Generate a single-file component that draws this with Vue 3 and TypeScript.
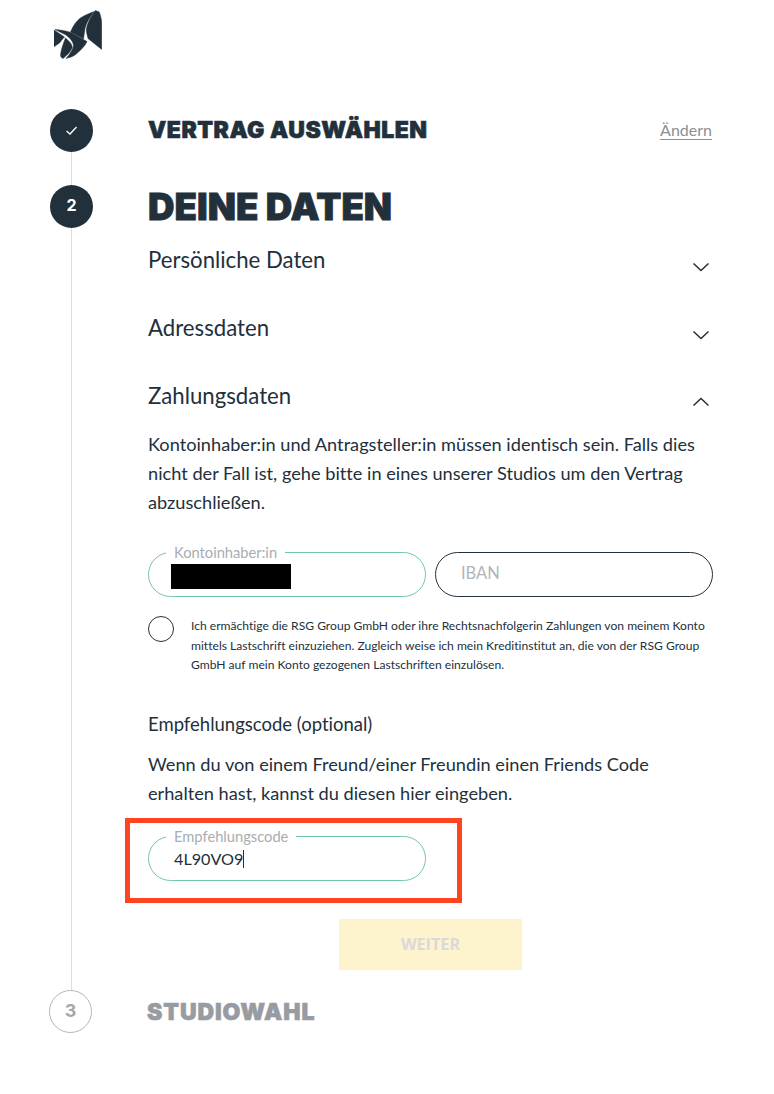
<template>
  <div class="page">
    <svg class="logo" width="48" height="50" viewBox="54 10 48 50" fill="#22303c" stroke="#22303c" stroke-width="0.5">
      <path d="M70.5 32 C73 26 76 21.5 80 18.3 C85 15 90 13 94.5 11.5 C90 17 86.5 22 85 28.5 L83.5 39 Z" />
      <path d="M95.5 10.5 L99.3 12 C101 17 101.7 20 101.7 24 L101.7 49.5 L88 38.5 C86.8 34 86 31 86.5 28.3 C88 21 92 15 95.5 10.5 Z" />
      <path d="M54 30 L64.5 37 C62 39.5 60.5 42 59.5 43 L54 46.7 Z" />
      <path d="M55 29.5 C62 30 66 31 71 32.5 L87 41.5 C85 46 80 51 75 55 C72 57 69 57.5 66 58.5 C70 54 72.5 50 73.5 46 C73.5 42 70 38 66 35 Z" />
      <path d="M65.5 38 C69 41 72 44 72.3 47 C71 52 66 56 63 58.5 C61 58 60.3 56 60.6 54 C61.5 48 63.5 43 65.5 38 Z" />
    </svg>

    <div class="steps">
      <div class="step-line"></div>

      <section class="step step-done">
        <div class="step-circle">
          <svg width="13" height="11" viewBox="0 0 13 11" fill="none" stroke="#fff" stroke-width="1.3">
            <path d="M1.5 6 L5 9 L11.5 2" />
          </svg>
        </div>
        <h2 class="step-title">VERTRAG AUSWÄHLEN</h2>
        <a class="change-link">Ändern</a>
      </section>

      <section class="step step-active">
        <div class="step-circle">2</div>
        <div class="step-body">
          <h1 class="main-title">DEINE DATEN</h1>

          <div v-for="row in closedRows" :key="row" class="acc-row">
            <span>{{ row }}</span>
            <svg class="chevron" width="18" height="10" viewBox="0 0 18 10" fill="none" stroke="#22303c" stroke-width="1.5">
              <path d="M1.5 1.5 L9 8.5 L16.5 1.5" />
            </svg>
          </div>

          <div class="acc-row acc-open">
            <span>Zahlungsdaten</span>
            <svg class="chevron" width="18" height="10" viewBox="0 0 18 10" fill="none" stroke="#22303c" stroke-width="1.5">
              <path d="M1.5 8.5 L9 1.5 L16.5 8.5" />
            </svg>
          </div>

          <p class="copy">
            Kontoinhaber:in und Antragsteller:in müssen identisch sein. Falls dies nicht der Fall ist, gehe bitte in eines unserer Studios um den Vertrag abzuschließen.
          </p>

          <div class="field-row">
            <div class="field field-filled">
              <span class="field-label">Kontoinhaber:in</span>
              <span class="redacted"></span>
            </div>
            <div class="field">
              <span class="field-placeholder">IBAN</span>
            </div>
          </div>

          <div class="consent">
            <span class="radio"></span>
            <p>
              Ich ermächtige die RSG Group GmbH oder ihre Rechtsnachfolgerin Zahlungen von meinem Konto mittels Lastschrift einzuziehen. Zugleich weise ich mein Kreditinstitut an, die von der RSG Group GmbH auf mein Konto gezogenen Lastschriften einzulösen.
            </p>
          </div>

          <h3 class="sub-title">Empfehlungscode (optional)</h3>
          <p class="copy copy-short">
            Wenn du von einem Freund/einer Freundin einen Friends Code erhalten hast, kannst du diesen hier eingeben.
          </p>

          <div class="field field-filled field-code">
            <span class="field-label">Empfehlungscode</span>
            <span class="field-value">4L90VO9</span><span class="caret"></span>
            <div class="highlight"></div>
          </div>

          <button class="next-btn" type="button">WEITER</button>
        </div>
      </section>

      <section class="step step-todo">
        <div class="step-circle">3</div>
        <h2 class="step-title">STUDIOWAHL</h2>
      </section>
    </div>
  </div>
</template>

<script setup lang="ts">
const closedRows: string[] = ['Persönliche Daten', 'Adressdaten'];
</script>

<style>
body {
  background: #fff;
}
</style>

<style scoped>
.page {
  width: 774px;
  height: 1094px;
  box-sizing: border-box;
  padding: 10px 61px 0 49px;
  font-family: Lato, "Open Sans", sans-serif;
  font-variant-ligatures: none;
  color: #22303c;
  background: #fff;
  overflow: hidden;
}

.logo {
  display: block;
  margin-left: 5px;
}

.steps {
  position: relative;
  margin-top: 49px;
}

.step-line {
  position: absolute;
  left: 22px;
  top: 20px;
  bottom: 20px;
  width: 1px;
  background: #dcdfe1;
}

.step {
  position: relative;
  display: flex;
  align-items: center;
}

.step-circle {
  flex: none;
  width: 43px;
  height: 43px;
  box-sizing: border-box;
  margin-left: 1px;
  border-radius: 50%;
  background: #22303c;
  color: #fff;
  display: flex;
  align-items: center;
  justify-content: center;
  font-family: Inter, sans-serif;
  font-weight: 700;
  font-size: 16px;
}

.step-title {
  margin: 0 0 0 55px;
  font-family: Inter, sans-serif;
  font-weight: 900;
  font-size: 23px;
  line-height: 43px;
  letter-spacing: 0.5px;
  -webkit-text-stroke: 0.6px currentColor;
}

.change-link {
  margin-left: auto;
  margin-right: 1px;
  margin-bottom: 3px;
  font-size: 16px;
  color: #8b9197;
  text-decoration: underline;
  text-underline-offset: 3px;
}

.step-active {
  align-items: flex-start;
  margin-top: 33px;
}

.step-active .step-circle {
  padding-bottom: 3px;
}

.step-body {
  width: 565px;
  margin-left: 55px;
}

.main-title {
  margin: 0 0 17px;
  font-family: Inter, sans-serif;
  font-weight: 900;
  font-size: 36.7px;
  line-height: 43px;
  -webkit-text-stroke: 0.8px currentColor;
}

.acc-row {
  display: flex;
  justify-content: space-between;
  align-items: flex-start;
  height: 68px;
  font-size: 22.2px;
  line-height: 30px;
  padding-right: 3px;
}

.chevron {
  margin-top: 17px;
}

.acc-open {
  height: 49px;
}

.acc-open .chevron {
  margin-top: 16px;
}

.copy {
  margin: 0;
  font-size: 18.2px;
  line-height: 29px;
}

.field-row {
  display: flex;
  gap: 9px;
  margin-top: 35px;
}

.field {
  position: relative;
  width: 278px;
  height: 45px;
  box-sizing: border-box;
  border: 1px solid #22303c;
  border-radius: 23px;
  padding-left: 25px;
  display: flex;
  align-items: center;
  font-size: 16px;
}

.field-filled {
  border-color: #73c8a9;
}

.field-label {
  position: absolute;
  left: 17px;
  top: -10px;
  padding: 0 8px;
  background: #fff;
  font-size: 14.7px;
  line-height: 18px;
  color: #a8adb1;
}

.field-placeholder {
  color: #b0b4b8;
  font-size: 16.5px;
  margin-top: -3px;
}

.redacted {
  width: 120px;
  height: 25px;
  margin-left: -3px;
  margin-top: 4px;
  background: #000;
}

.consent {
  display: flex;
  align-items: flex-start;
  gap: 17px;
  margin-top: 19px;
}

.radio {
  flex: none;
  width: 26px;
  height: 26px;
  box-sizing: border-box;
  border: 1px solid #22303c;
  border-radius: 50%;
}

.consent p {
  margin: 0;
  font-size: 12.1px;
  line-height: 19.5px;
}

.sub-title {
  margin: 37px 0 0;
  font-weight: 400;
  font-size: 18.5px;
  line-height: 24px;
}

.copy-short {
  margin-top: 14px;
}

.field-code {
  margin-top: 28px;
}

.field-value {
  font-size: 16.2px;
  margin-top: 1px;
}

.caret {
  width: 1px;
  height: 18px;
  margin-top: 2px;
  background: #22303c;
}

.highlight {
  position: absolute;
  left: -24px;
  right: -37px;
  top: -19px;
  bottom: -23px;
  border: 5px solid #ff4422;
  pointer-events: none;
}

.next-btn {
  display: block;
  width: 183px;
  height: 51px;
  margin: 38px 0 0 191px;
  border: none;
  background: #fdf3cd;
  color: #d9dadb;
  font-family: "Open Sans", sans-serif;
  font-weight: 700;
  font-size: 16.2px;
}

.step-todo {
  margin-top: 20px;
  margin-left: -1px;
}

.step-todo .step-circle {
  background: #fff;
  border: 1px solid #b3b7ba;
  color: #a4a8ad;
  font-size: 18px;
  padding-bottom: 3px;
}

.step-todo .step-title {
  color: #979ca2;
  margin-left: 55px;
  margin-top: 1px;
  letter-spacing: 0.9px;
}
</style>
